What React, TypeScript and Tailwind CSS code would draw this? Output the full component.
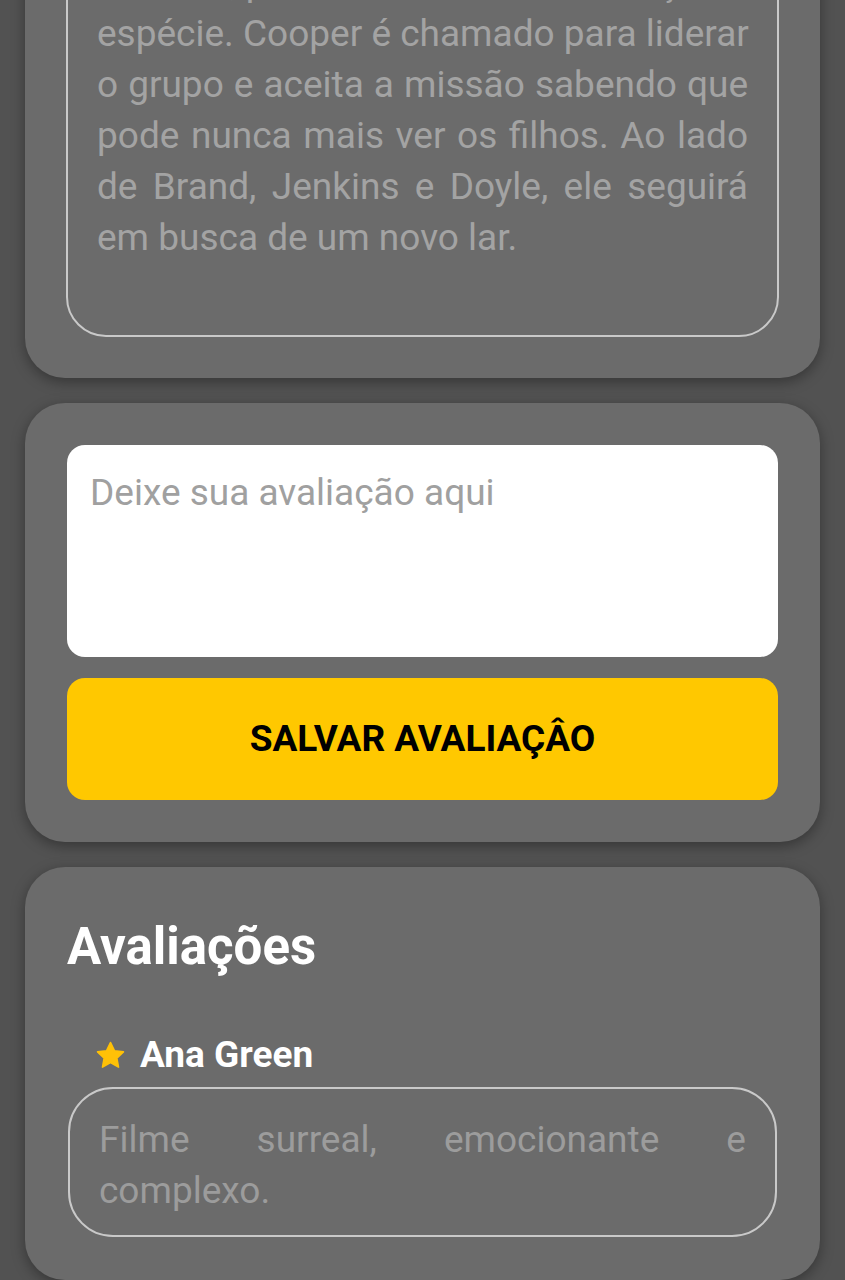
import React from "react";

const synopsis = [
  "mundial, possibilitando a continuação da",
  "espécie. Cooper é chamado para liderar",
  "o grupo e aceita a missão sabendo que",
  "pode nunca mais ver os filhos. Ao lado",
  "de Brand, Jenkins e Doyle, ele seguirá",
];

function Star() {
  return (
    <svg viewBox="0 0 24 24" className="w-[33px] h-[33px]" aria-hidden="true">
      <path
        d="M12 2.6l2.9 6 6.5.8-4.8 4.5 1.2 6.5L12 17.2l-5.8 3.2 1.2-6.5-4.8-4.5 6.5-.8z"
        fill="#FFC107"
        stroke="#FFC107"
        strokeWidth="1.2"
        strokeLinejoin="round"
      />
    </svg>
  );
}

export default function App() {
  return (
    <div
      className="min-h-[1280px] w-[845px] bg-[#525252] overflow-hidden flex flex-col gap-[25px] px-[25px] pb-[40px]"
      style={{ fontFamily: 'Roboto, "Noto Sans", "Liberation Sans", sans-serif' }}
    >
      {/* Synopsis card */}
      <div className="-mt-[106px] bg-[#6b6b6b] rounded-[40px] px-[41px] pt-[41px] pb-[41px] shadow-[0_4px_14px_rgba(0,0,0,0.35)]">
        <div className="border-2 border-[#c9c9c9] rounded-[40px] px-[29px] pt-[20px] pb-[72px] text-[37px] leading-[51px] text-[#a3a3a3]">
          {synopsis.map((l, i) => (
            <div key={i} className="whitespace-nowrap text-justify [text-align-last:justify]">
              {l}
            </div>
          ))}
          <div>em busca de um novo lar.</div>
        </div>
      </div>

      {/* Review input card */}
      <div className="bg-[#6b6b6b] rounded-[40px] px-[42px] py-[42px] flex flex-col gap-[21px] shadow-[0_4px_14px_rgba(0,0,0,0.35)]">
        <textarea
          className="h-[212px] w-full resize-none bg-white rounded-[18px] px-[23px] pt-[26px] text-[37px] leading-[44px] text-[#333] placeholder:text-[#a0a0a0] outline-none"
          placeholder="Deixe sua avaliação aqui"
        />
        <button className="h-[122px] w-full bg-[#FFC800] rounded-[18px] text-[37px] font-bold text-black">
          SALVAR AVALIAÇÂO
        </button>
      </div>

      {/* Reviews card */}
      <div className="bg-[#6b6b6b] rounded-[40px] px-[42px] pt-[50px] pb-[43px] shadow-[0_4px_14px_rgba(0,0,0,0.35)]">
        <h2 className="text-[51px] leading-[60px] font-bold text-white">Avaliações</h2>
        <div className="mt-[56px] flex items-center gap-[13px] pl-[27px] h-[44px]">
          <Star />
          <span className="text-[37px] font-bold text-white leading-[44px]">Ana Green</span>
        </div>
        <div className="mt-[10px] mx-[1px] border-2 border-[#c9c9c9] rounded-[45px] px-[29px] pt-[25px] pb-[19px] text-[37px] leading-[51px] text-[#9c9c9c]">
          <div className="whitespace-nowrap text-justify [text-align-last:justify]">Filme surreal, emocionante e</div>
          <div>complexo.</div>
        </div>
      </div>
    </div>
  );
}
